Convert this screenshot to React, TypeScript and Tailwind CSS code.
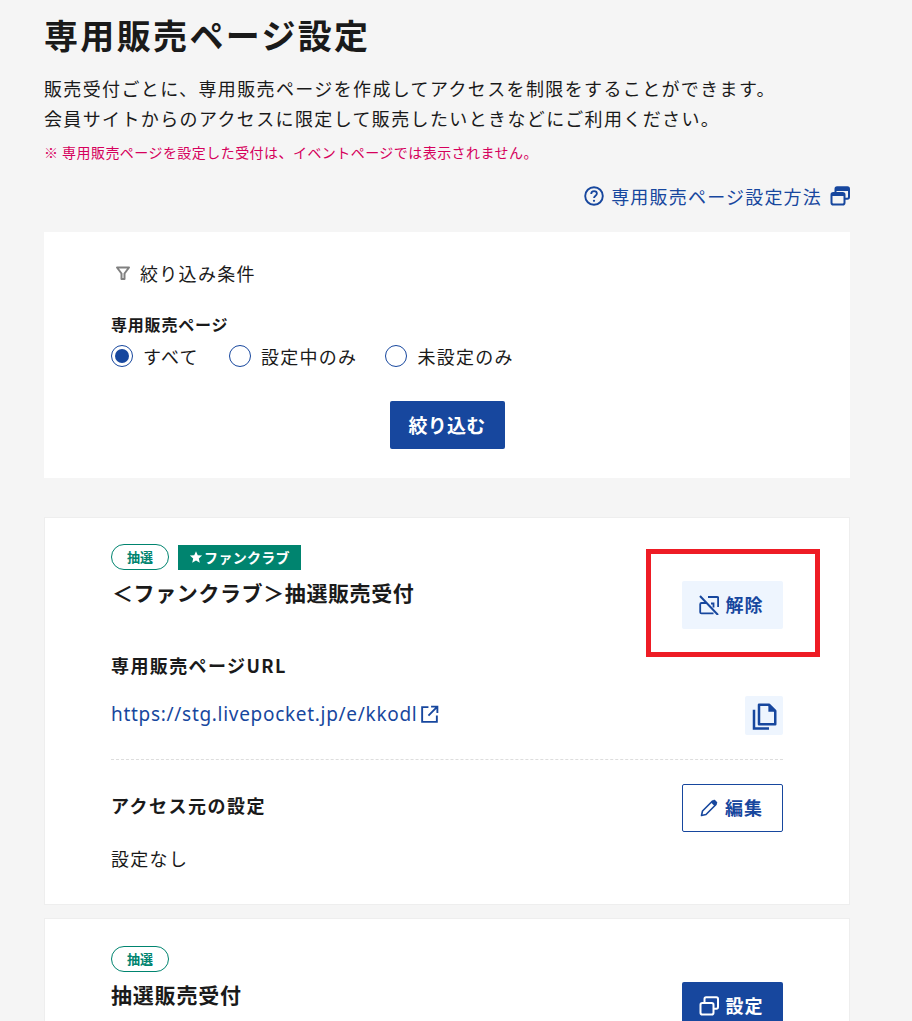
import React from 'react'

const font = { fontFamily: '"Noto Sans CJK JP", "Noto Sans", sans-serif' }

function WindowIcon({ className, bars }: { className?: string; bars?: boolean }) {
  return (
    <svg viewBox="0 0 20 20" fill="none" className={className} aria-hidden="true">
      <path d="M5.500 6V3c0-1 .6-1.800 1.600-1.800h10.300c1 0 1.600.8 1.600 1.800v8c0 1-.6 1.700-1.600 1.700H15" stroke="currentColor" strokeWidth="2" />
      <rect x="1.500" y="7" width="13" height="11.500" rx="1.800" stroke="currentColor" strokeWidth="2" />
      {bars && <path d="M5.500 2h13v3h-13zM1.500 7h13v3h-13z" fill="currentColor" />}
    </svg>
  )
}

function UnlinkIcon({ className }: { className?: string }) {
  return (
    <svg viewBox="0 0 20 20" fill="none" className={className} aria-hidden="true">
      <path d="M9 2h9c.8 0 1.200.5 1.200 1.200V12" stroke="currentColor" strokeWidth="2" />
      <path d="M12 8.500h2.500v4" stroke="currentColor" strokeWidth="1.800" />
      <path d="M8 8H2.500C1.700 8 1.200 8.500 1.200 9.200v8c0 .7.500 1.200 1.300 1.200H14.500" stroke="currentColor" strokeWidth="1.800" />
      <path d="M1 1l18 19" stroke="currentColor" strokeWidth="2" />
    </svg>
  )
}

function Badge() {
  return (
    <span className="flex h-[26px] w-[58px] items-center justify-center rounded-full border border-[#00846f] bg-white text-[13px] font-bold text-[#00846f]">
      抽選
    </span>
  )
}

function Radio({ label, checked, className }: { label: string; checked?: boolean; className?: string }) {
  return (
    <label className={`flex items-center gap-[10px] ${className ?? ''}`}>
      <span className="flex h-[22px] w-[22px] items-center justify-center rounded-full border border-[#17479e] bg-white">
        {checked && <span className="h-[14px] w-[14px] rounded-full bg-[#17479e]" />}
      </span>
      <span className="text-[18px] leading-[22px] tracking-[1.3px]">{label}</span>
    </label>
  )
}

export default function App() {
  return (
    <div className="relative h-[1021px] overflow-hidden bg-[#f5f5f5] pl-[44px] pr-[62px] text-[#1a1a1a]" style={font}>
      <h1 className="pt-[11px] text-[34px] font-bold leading-[48px] tracking-[2.35px]">専用販売ページ設定</h1>

      <p className="mt-[14px] text-[18px] leading-[30px] tracking-[1.37px]">
        販売受付ごとに、専用販売ページを作成してアクセスを制限をすることができます。
        <br />
        会員サイトからのアクセスに限定して販売したいときなどにご利用ください。
      </p>
      <p className="mt-[7px] text-[14px] leading-[24px] tracking-[0.45px] text-[#d6005c]">
        ※ 専用販売ページを設定した受付は、イベントページでは表示されません。
      </p>

      <div className="mt-[18px] flex items-center justify-end text-[#17479e]">
        <svg viewBox="0 0 20 20" fill="none" className="h-[20px] w-[20px]" aria-hidden="true">
          <circle cx="10" cy="10" r="8.800" stroke="currentColor" strokeWidth="1.900" />
          <path d="M7.200 8c0-1.700 1.200-2.900 2.900-2.900 1.600 0 2.800 1.100 2.800 2.500 0 2.100-2.900 2.100-2.900 4.500" stroke="currentColor" strokeWidth="1.800" />
          <circle cx="10" cy="14.800" r="1.100" fill="currentColor" />
        </svg>
        <span className="ml-[7px] text-[18px] leading-[28px] tracking-[1.2px]">専用販売ページ設定方法</span>
        <WindowIcon bars className="ml-[8px] h-[20px] w-[20px]" />
      </div>

      <section className="mt-[22px] h-[246px] bg-white pl-[67px] pr-[67px] pt-[27px]">
        <div className="flex items-center pl-[4px]">
          <svg viewBox="0 0 16 16" className="h-[16px] w-[16px] text-[#808080]" fill="none" aria-hidden="true">
            <path d="M2 2.500h12L9.500 8.500V14h-3V8.500z" stroke="currentColor" strokeWidth="2" strokeLinejoin="round" />
          </svg>
          <span className="ml-[9px] text-[18px] leading-[28px] tracking-[1.3px]">絞り込み条件</span>
        </div>
        <div className="mt-[24px] text-[16px] font-bold leading-[26px] tracking-[0.8px]">専用販売ページ</div>
        <div className="mt-[8px] flex items-center">
          <Radio label="すべて" checked />
          <Radio label="設定中のみ" className="ml-[30px]" />
          <Radio label="未設定のみ" className="ml-[28px]" />
        </div>
        <div className="mt-[34px] flex justify-center">
          <button className="h-[48px] w-[115px] rounded-[2px] bg-[#17479e] text-[19px] font-bold tracking-[0.2px] text-white">絞り込む</button>
        </div>
      </section>

      <section className="mt-[39px] h-[388px] border border-[#eeeeee] bg-white pl-[66px] pr-[66px] pt-[26px]">
        <div className="flex items-center gap-[9px]">
          <Badge />
          <span className="flex h-[25px] w-[123px] items-center justify-center bg-[#00846f] text-[14px] font-bold tracking-[0.3px] text-white">
            <svg viewBox="0 0 24 24" className="h-[14px] w-[14px] fill-white" aria-hidden="true">
              <path d="M12 2l3 7 7.500.6-5.700 5 1.700 7.400L12 18l-6.500 4 1.700-7.400-5.700-5L9 9z" />
            </svg>
            <span className="ml-[1px]">ファンクラブ</span>
          </span>
        </div>
        <div className="flex items-start justify-between">
          <h2 className="ml-[1px] mt-[7px] text-[21px] font-bold leading-[30px] tracking-[0.6px]">＜ファンクラブ＞抽選販売受付</h2>
          <button className="mt-[11px] flex h-[48px] w-[101px] items-center justify-center rounded-[2px] bg-[#eef5fe] pb-[1px] pr-[3px] text-[18px] font-bold tracking-[1px] text-[#17479e]">
            <UnlinkIcon className="h-[20px] w-[20px]" />
            <span className="ml-[7px]">解除</span>
          </button>
        </div>
        <h3 className="mt-[22px] text-[18px] font-bold leading-[28px] tracking-[1.4px]">専用販売ページURL</h3>
        <div className="mt-[17px] flex items-center justify-between">
          <a className="mb-[3px] flex items-center text-[19px] leading-[30px] tracking-[0.7px] text-[#17479e]" style={{ fontFamily: '"Noto Sans", sans-serif' }}>
            https://stg.livepocket.jp/e/kkodl
            <svg viewBox="0 0 20 20" fill="none" className="ml-[2px] h-[21px] w-[21px]" aria-hidden="true">
              <path d="M9 3H3v14h14v-6M11.500 2.500h6v6M17 3l-8 8" stroke="currentColor" strokeWidth="1.800" />
            </svg>
          </a>
          <button className="flex h-[39px] w-[38px] items-center justify-center rounded-[2px] bg-[#eef5fe] text-[#17479e]">
            <svg viewBox="0 0 24 24" fill="none" className="h-[30px] w-[30px]" aria-hidden="true">
              <path d="M8 3h8l5 5v10.500H8z" stroke="currentColor" strokeWidth="2" strokeLinejoin="round" />
              <path d="M15.500 3l5.500 5.500h-5.500z" fill="currentColor" />
              <path d="M4 7v15h12" stroke="currentColor" strokeWidth="2" />
            </svg>
          </button>
        </div>
        <div className="mt-[24px] border-t border-dashed border-[#dddddd]" />
        <div className="mt-[24px] flex items-start justify-between">
          <h3 className="mt-[7px] text-[18px] font-bold leading-[28px] tracking-[1.5px]">アクセス元の設定</h3>
          <button className="flex h-[48px] w-[101px] items-center justify-center rounded-[2px] border border-[#17479e] bg-white pb-[1px] pr-[3px] text-[18px] font-bold tracking-[1px] text-[#17479e]">
            <svg viewBox="0 0 20 20" fill="none" className="h-[20px] w-[20px]" aria-hidden="true">
              <path d="M2.500 17.500l1-4.500L13.500 3l3.500 3.500-10 10z" stroke="currentColor" strokeWidth="1.600" strokeLinejoin="round" />
              <path d="M12 4.500L14.500 2c.5-.4 1-.4 1.500 0l2 2c.4.5.4 1 0 1.500L15.500 8z" fill="currentColor" />
            </svg>
            <span className="ml-[6px]">編集</span>
          </button>
        </div>
        <p className="mt-[12px] text-[18px] leading-[28px] tracking-[1.3px]">設定なし</p>
      </section>

      <section className="mt-[13px] h-[200px] border border-[#eeeeee] bg-white pl-[66px] pr-[66px] pt-[27px]">
        <Badge />
        <div className="flex items-start justify-between">
          <h2 className="mt-[7px] text-[21px] font-bold leading-[30px] tracking-[0.8px]">抽選販売受付</h2>
          <button className="mt-[10px] flex h-[48px] w-[101px] items-center justify-center rounded-[2px] bg-[#17479e] pb-[1px] pr-[3px] text-[18px] font-bold tracking-[1px] text-white">
            <WindowIcon className="h-[20px] w-[20px]" />
            <span className="ml-[7px]">設定</span>
          </button>
        </div>
      </section>

      {/* annotation from the screenshot */}
      <div className="absolute left-[646px] top-[549px] h-[108px] w-[174px] border-[5px] border-[#ee1c25]" />
    </div>
  )
}
